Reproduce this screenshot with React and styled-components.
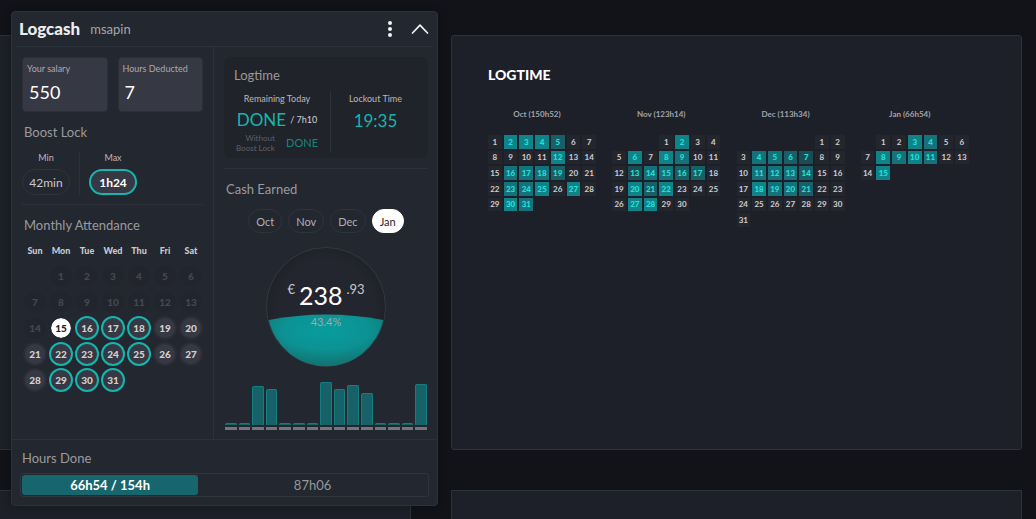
import React, { useState } from "react";
import styled, { createGlobalStyle, css } from "styled-components";

const c = {
  page: "#121319",
  panel: "#1d2028",
  popup: "#23272f",
  line: "#2d3139",
  raised: "#363843",
  teal: "#16b5af",
  muted: "#9a9a9e",
};

const Global = createGlobalStyle`
  * { box-sizing: border-box; }
  body { margin: 0; background: ${c.page}; color: #dcdce0; font-family: Lato, "Liberation Sans", sans-serif; }
  button, input { font: inherit; color: inherit; }
  button { cursor: pointer; }
`;

/* ---------- dashboard behind the popup ---------- */

const Dashboard = styled.main`
  display: grid;
  grid-template-columns: minmax(0, 411fr) minmax(0, 571fr);
  grid-template-rows: minmax(415px, auto) 1fr;
  gap: 40px;
  min-height: 100vh;
  padding: 35px 14px 0 0;
`;

const Panel = styled.section`
  padding: 29px 36px;
  background: ${c.panel};
  border: 1px solid ${c.line};
  border-left-width: ${(p) => (p.$bleedLeft ? 0 : "1px")};
  border-bottom-width: ${(p) => (p.$bleedBottom ? 0 : "1px")};
  border-radius: ${(p) => (p.$bleedLeft || p.$bleedBottom ? 0 : "3px")};
  min-height: 28px;
  ${(p) => p.$bleedBottom && css`padding: 0;`}
`;

const PanelTitle = styled.h2`
  margin: 0;
  font-size: 14px;
  line-height: 20px;
  font-weight: 900;
  color: #fff;
`;

const Months = styled.div`
  display: grid;
  grid-template-columns: repeat(4, minmax(0, 1fr));
  margin-top: 21px;
`;

const Month = styled.section``;

const MonthName = styled.h3`
  width: 98px;
  margin: 0 0 13px;
  font-size: 8px;
  line-height: 16px;
  font-weight: 700;
  text-align: center;
  color: #a3a3a8;
`;

const MonthDays = styled.ol`
  display: grid;
  grid-template-columns: repeat(7, 1fr);
  grid-template-rows: repeat(6, 1fr);
  gap: 2px;
  width: 108px;
  height: 92px;
  margin: 0;
  padding: 0;
  list-style: none;
`;

const shades = ["#24262e", "#1b4c53", "#185f66", "#15717a", "#0f8388"];

const MonthDay = styled.li`
  display: flex;
  align-items: center;
  justify-content: center;
  grid-column-start: ${(p) => p.$start};
  background: ${(p) => shades[p.$level]};
  color: ${(p) => (p.$level ? "#22e0db" : "#cfcfd3")};
  font-size: 8px;
  line-height: 10px;
  font-weight: ${(p) => (p.$level ? 900 : 700)};
`;

/* ---------- popup ---------- */

const Popup = styled.aside`
  position: absolute;
  top: 11px;
  left: 11px;
  width: 427px;
  background: ${c.popup};
  border: 1px solid ${c.line};
  border-radius: 4px;
  box-shadow: 0 0 8px rgba(0, 0, 0, 0.35);
`;

const Header = styled.header`
  display: flex;
  align-items: center;
  height: 35px;
  margin: 0 4px;
  padding: 0 3px;
  border-bottom: 1px solid ${c.line};
`;

const Brand = styled.h1`
  margin: 0 10px 0 0;
  font-size: 17px;
  line-height: 20px;
  font-weight: 900;
  color: #ececf0;
`;

const Login = styled.span`
  flex: 1;
  font-size: 13px;
  color: #a5a5a9;
`;

const IconButton = styled.button`
  display: flex;
  align-items: center;
  justify-content: center;
  width: 20px;
  height: 24px;
  margin-left: 10px;
  padding: 0;
  background: none;
  border: 0;
`;

const Columns = styled.div`
  display: grid;
  grid-template-columns: 202px 1fr;
  border-bottom: 1px solid ${c.line};
`;

const Left = styled.div`
  padding: 10px;
  border-right: 1px solid ${c.line};
`;

const Right = styled.div`
  padding: 10px 9px 9px 10px;
`;

const Fields = styled.div`
  display: grid;
  grid-template-columns: 1fr 1fr;
  gap: 10px;
`;

const Field = styled.label`
  display: block;
  height: 55px;
  padding: 5px 4px;
  background: ${c.raised};
  border: 1px solid #2d3039;
  border-radius: 4px;
  font-size: 9px;
  line-height: 11px;
  color: #aaaab0;
`;

const FieldInput = styled.input`
  display: block;
  width: 100%;
  height: 24px;
  margin-top: 6px;
  padding: 0 2px;
  background: none;
  border: 0;
  outline: 0;
  font-size: 18px;
  color: #fff;
`;

const Heading = styled.h2`
  margin: 0;
  padding: 0 2px;
  font-size: 13px;
  line-height: 20px;
  font-weight: 400;
  color: ${c.muted};
`;

const SpacedHeading = styled(Heading)`
  margin-top: 10px;
`;

const BoostRow = styled.div`
  display: flex;
  gap: 9px;
  margin: 10px 0 9px;
`;

const Boost = styled.div`
  display: flex;
  flex-direction: column;
  align-items: center;
  gap: 6px;
  width: 48px;
  font-size: 9px;
  line-height: 11px;
  color: #b9b9bd;
`;

const BoostPill = styled.button`
  width: 48px;
  height: 26px;
  padding: 0;
  border: ${(p) => (p.$active ? `2px solid ${c.teal}` : "1px solid #30333c")};
  border-radius: 13px;
  background: ${(p) => (p.$active ? c.raised : "transparent")};
  color: ${(p) => (p.$active ? "#fff" : "#c8c8cc")};
  font-size: 12px;
  font-weight: ${(p) => (p.$active ? 700 : 400)};
`;

const Separator = styled.div`
  width: 1px;
  background: ${c.line};
`;

const Rule = styled.hr`
  height: 1px;
  margin: 0;
  border: 0;
  background: ${c.line};
`;

const CashRule = styled(Rule)`
  margin-top: 10px;
`;

const Attendance = styled.table`
  width: 182px;
  margin-top: 3px;
  border-collapse: collapse;
  table-layout: fixed;
  text-align: center;

  th { height: 25px; padding: 0; font-size: 9px; font-weight: 900; color: #c9c9cd; }
  td { height: 26px; padding: 0; }
`;

const dayLooks = {
  past: css`background: #22252d; border: 1px solid #262931; color: #454850; line-height: 20px;`,
  today: css`background: #fff; border: 2px solid ${c.popup}; color: #1b1d24; background-clip: padding-box;`,
  office: css`background: ${c.raised}; border: 2px solid ${c.teal};`,
  off: css`background: ${c.raised}; border: 2px solid #2b2e37;`,
};

const DayButton = styled.button`
  display: block;
  width: 24px;
  height: 24px;
  margin: 0 auto;
  padding: 0;
  border-radius: 50%;
  color: #d4d0cc;
  font-size: 10px;
  line-height: 18px;
  font-weight: 900;
  ${(p) => dayLooks[p.$kind]}
`;

const LogCard = styled.section`
  height: 101px;
  padding: 8px;
  background: #20232a;
  border-radius: 6px;
`;

const LogSplit = styled.div`
  display: grid;
  grid-template-columns: 98px 1px 1fr;
  margin-top: 6px;
`;

const LogPart = styled.div`
  display: flex;
  flex-direction: column;
  align-items: center;
  padding: ${(p) => (p.$wide ? "0 12px 0 4px" : 0)};
  font-size: 9px;
  line-height: 16px;
  color: #b9b9bd;
`;

const Value = styled.strong`
  font-size: 17px;
  line-height: 28px;
  font-weight: 400;
  color: ${c.teal};
`;

const Remaining = styled.div`
  display: flex;
  align-items: center;
  gap: 4px;
  height: 26px;
  white-space: nowrap;
  color: #d2d2d6;
`;

const WithoutBoost = styled.div`
  display: flex;
  align-items: center;
  justify-content: space-between;
  width: 100%;
  font-size: 8px;
  line-height: 10px;
  text-align: right;
  color: #5f6167;
`;

const SmallValue = styled.span`
  font-size: 11px;
  color: #18857f;
`;

const Tabs = styled.div`
  display: flex;
  justify-content: center;
  gap: 6px;
  margin: 10px 0 14px;
`;

const Tab = styled.button`
  height: 24px;
  padding: 0 7px;
  border: 1px solid ${(p) => (p.$active ? "#fff" : "#30333c")};
  border-radius: 12px;
  background: ${(p) => (p.$active ? "#fff" : "transparent")};
  color: ${(p) => (p.$active ? "#1f2229" : "#b0b0b4")};
  font-size: 11px;
`;

const Gauge = styled.div`
  display: grid;
  width: 120px;
  height: 120px;
  margin: 0 auto;

  > * { grid-area: 1 / 1; }
`;

const GaugeText = styled.div`
  z-index: 1;
  display: flex;
  flex-direction: column;
  align-items: center;
  padding-top: 33px;
  font-size: 11px;
  line-height: 16px;
  color: #a3aaa4;
`;

const Amount = styled.div`
  display: flex;
  align-items: flex-start;
  gap: 4px;
  height: 34px;
  font-size: 13px;
  line-height: 18px;
  color: #c8c8cc;
`;

const Euros = styled.strong`
  font-size: 25px;
  line-height: 30px;
  font-weight: 400;
  color: #fff;
`;

const Chart = styled.div`
  display: grid;
  grid-template-columns: repeat(15, 1fr);
  gap: 2px;
  align-items: end;
  height: 50px;
  margin: 13px 1px 0;
`;

const Bar = styled.div`
  background: #176169;
  border: 1px solid #147f80;
  border-bottom-width: 0;
  border-radius: 2px 2px 0 0;
`;

const Column = styled.div`
  display: grid;
  gap: 2px;

  &::after { content: ""; height: 3px; background: #77747b; }
`;

const Footer = styled.footer`
  padding: 8px;
`;

const Progress = styled.div`
  display: grid;
  grid-template-columns: 177fr 230fr;
  height: 24px;
  margin-top: 5px;
  padding: 1px;
  border: 1px solid #30343c;
  border-radius: 3px;
  font-size: 13px;
  line-height: 20px;
  text-align: center;
  color: #97979b;
`;

const ProgressDone = styled.div`
  background: #17666d;
  border-radius: 3px;
  color: #fff;
  font-weight: 700;
`;

const months = [
  { name: "Oct (150h52)", start: 1, days: 31, levels: { 2: 4, 3: 4, 4: 4, 5: 2, 12: 4, 16: 3, 17: 3, 18: 3, 19: 2, 23: 3, 24: 3, 25: 4, 27: 4, 30: 4, 31: 3 } },
  { name: "Nov (123h14)", start: 4, days: 30, levels: { 2: 4, 6: 4, 8: 4, 9: 3, 13: 1, 14: 3, 15: 3, 16: 2, 17: 2, 20: 4, 21: 2, 22: 4, 27: 4, 28: 4 } },
  { name: "Dec (113h34)", start: 6, days: 31, levels: { 4: 3, 5: 3, 6: 2, 7: 1, 11: 3, 12: 3, 13: 3, 14: 2, 18: 4, 19: 3, 20: 3, 21: 2 } },
  { name: "Jan (66h54)", start: 2, days: 15, levels: { 3: 4, 4: 3, 8: 4, 9: 3, 10: 4, 11: 3, 15: 4 } },
];

const weekdays = ["Sun", "Mon", "Tue", "Wed", "Thu", "Fri", "Sat"];
const officeDays = [16, 17, 18, 22, 23, 24, 25, 29, 30, 31];
const weeks = [0, 1, 2, 3, 4].map((w) => weekdays.map((_, d) => w * 7 + d));
const bars = [2, 2, 39, 36, 2, 2, 2, 43, 36, 40, 32, 2, 2, 2, 41];

const dayKind = (n) =>
  n < 15 ? "past" : n === 15 ? "today" : officeDays.includes(n) ? "office" : "off";

function WaveGauge() {
  return (
    <svg width="120" height="120" viewBox="0 0 120 120" aria-hidden="true">
      <defs>
        <radialGradient id="water" cx="0.5" cy="0.3" r="0.75">
          <stop offset="0" stopColor="#089c9d" />
          <stop offset="0.5" stopColor="#0c9293" />
          <stop offset="1" stopColor="#146b69" />
        </radialGradient>
        <radialGradient id="glass">
          <stop offset="0.8" stopColor="#23262e" />
          <stop offset="1" stopColor="#1f2228" />
        </radialGradient>
      </defs>
      <circle cx="60" cy="60" r="59.500" fill="url(#glass)" stroke="#343840" strokeWidth="1" />
      <path d="M2.8 73Q60 62 117.2 73A58.5 58.5 0 0 1 2.8 73Z" fill="url(#water)" />
    </svg>
  );
}

export default function App() {
  const [salary, setSalary] = useState("550");
  const [deducted, setDeducted] = useState("7");
  const [tab, setTab] = useState("Jan");

  return (
    <>
      <Global />
      <Dashboard>
        <Panel $bleedLeft />
        <Panel>
          <PanelTitle>LOGTIME</PanelTitle>
          <Months>
            {months.map((m) => (
              <Month key={m.name}>
                <MonthName>{m.name}</MonthName>
                <MonthDays>
                  {Array.from({ length: m.days }, (_, i) => (
                    <MonthDay key={i} $start={i === 0 ? m.start : "auto"} $level={m.levels[i + 1] || 0}>
                      {i + 1}
                    </MonthDay>
                  ))}
                </MonthDays>
              </Month>
            ))}
          </Months>
        </Panel>
        <Panel $bleedLeft $bleedBottom />
        <Panel $bleedBottom />
      </Dashboard>

      <Popup>
        <Header>
          <Brand>Logcash</Brand>
          <Login>msapin</Login>
          <IconButton aria-label="Menu">
            <svg width="6" height="18" viewBox="0 0 6 18" fill="#f2f2f5">
              <circle cx="3" cy="3" r="2" />
              <circle cx="3" cy="9" r="2" />
              <circle cx="3" cy="15" r="2" />
            </svg>
          </IconButton>
          <IconButton aria-label="Collapse">
            <svg width="18" height="12" viewBox="0 0 18 12" fill="none" stroke="#f2f2f5" strokeWidth="1.7" strokeLinecap="round" strokeLinejoin="round">
              <path d="M1.5 10L9 2.2L16.5 10" />
            </svg>
          </IconButton>
        </Header>

        <Columns>
          <Left>
            <Fields>
              <Field>
                Your salary
                <FieldInput value={salary} onChange={(e) => setSalary(e.target.value)} />
              </Field>
              <Field>
                Hours Deducted
                <FieldInput value={deducted} onChange={(e) => setDeducted(e.target.value)} />
              </Field>
            </Fields>
            <SpacedHeading>Boost Lock</SpacedHeading>
            <BoostRow>
              <Boost>
                Min
                <BoostPill>42min</BoostPill>
              </Boost>
              <Separator />
              <Boost>
                Max
                <BoostPill $active>1h24</BoostPill>
              </Boost>
            </BoostRow>
            <Rule />
            <SpacedHeading>Monthly Attendance</SpacedHeading>
            <Attendance>
              <thead>
                <tr>{weekdays.map((d) => <th key={d} scope="col">{d}</th>)}</tr>
              </thead>
              <tbody>
                {weeks.map((week) => (
                  <tr key={week[0]}>
                    {week.map((n) => (
                      <td key={n}>
                        {n > 0 && n < 32 && <DayButton $kind={dayKind(n)}>{n}</DayButton>}
                      </td>
                    ))}
                  </tr>
                ))}
              </tbody>
            </Attendance>
          </Left>

          <Right>
            <LogCard>
              <Heading>Logtime</Heading>
              <LogSplit>
                <LogPart $wide>
                  Remaining Today
                  <Remaining><Value>DONE</Value>/ 7h10</Remaining>
                  <WithoutBoost>
                    <span>Without<br />Boost Lock</span>
                    <SmallValue>DONE</SmallValue>
                  </WithoutBoost>
                </LogPart>
                <Separator />
                <LogPart>
                  Lockout Time
                  <Value>19:35</Value>
                </LogPart>
              </LogSplit>
            </LogCard>
            <CashRule />
            <SpacedHeading>Cash Earned</SpacedHeading>
            <Tabs>
              {["Oct", "Nov", "Dec", "Jan"].map((m) => (
                <Tab key={m} $active={m === tab} onClick={() => setTab(m)}>{m}</Tab>
              ))}
            </Tabs>
            <Gauge>
              <WaveGauge />
              <GaugeText>
                <Amount>€<Euros>238</Euros>.93</Amount>
                43.4%
              </GaugeText>
            </Gauge>
            <Chart>
              {bars.map((h, i) => (
                <Column key={i}><Bar style={{ height: h }} /></Column>
              ))}
            </Chart>
          </Right>
        </Columns>

        <Footer>
          <Heading>Hours Done</Heading>
          <Progress>
            <ProgressDone>66h54 / 154h</ProgressDone>
            <span>87h06</span>
          </Progress>
        </Footer>
      </Popup>
    </>
  );
}
